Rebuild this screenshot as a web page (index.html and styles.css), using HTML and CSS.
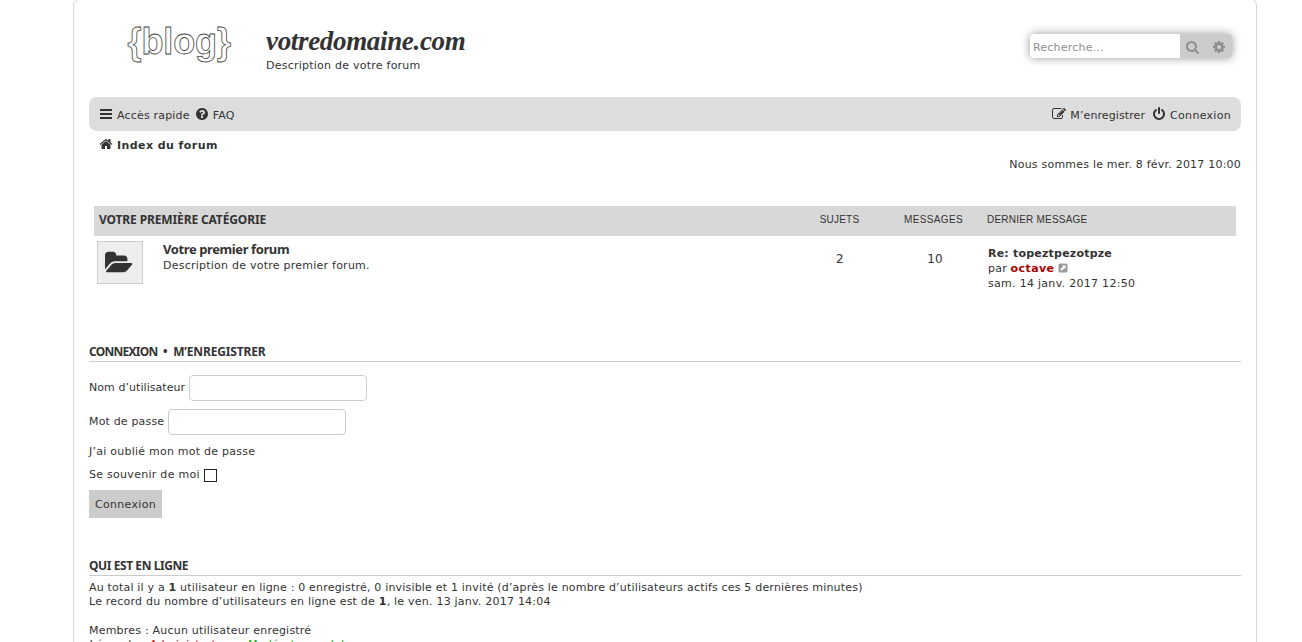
FILE: index.html
```html
<!DOCTYPE html>
<html lang="fr">
<head>
<meta charset="utf-8">
<title>votredomaine.com - Index du forum</title>
<link rel="stylesheet" href="styles.css">
</head>
<body>
<div class="wrap">
  <header class="header">
    <svg class="logo" width="112" height="46" viewBox="0 0 112 46"><text x="5.500" y="32" textLength="103.500" lengthAdjust="spacing">{blog}</text></svg>
    <div class="site">
      <h1 class="site-title">votredomaine.com</h1>
      <p class="site-desc">Description de votre forum</p>
    </div>
    <form class="search">
      <input class="search-input" type="text" placeholder="Recherche…">
      <span class="search-btn"><svg width="14" height="14" viewBox="0 0 1792 1792"><path d="M1152 832q0-185-131.500-316.500t-316.500-131.500-316.500 131.500-131.500 316.500 131.500 316.500 316.500 131.500 316.500-131.500 131.500-316.500zm512 832q0 52-38 90t-90 38q-54 0-90-38l-343-342q-179 124-399 124-143 0-273.500-55.500t-225-150-150-225-55.500-273.500 55.500-273.500 150-225 225-150 273.500-55.500 273.500 55.500 225 150 150 225 55.500 273.500q0 220-124 399l343 343q37 37 37 90z"/></svg></span>
      <span class="search-btn"><svg width="14" height="14" viewBox="0 0 1792 1792"><path d="M1152 896q0-106-75-181t-181-75-181 75-75 181 75 181 181 75 181-75 75-181zm512-109v222q0 12-8 23t-20 13l-185 28q-19 54-39 91 35 50 107 138 10 12 10 25t-9 23q-27 37-99 108t-94 71q-12 0-26-9l-138-108q-44 23-91 38-16 136-29 186-7 28-36 28h-222q-14 0-24.500-8.500t-11.500-21.500l-28-184q-49-16-90-37l-141 107q-10 9-25 9-14 0-25-11-126-114-165-168-7-10-7-23 0-12 8-23 15-21 51-66.500t54-70.500q-27-50-41-99l-183-27q-13-2-21-12.500t-8-23.500v-222q0-12 8-23t19-13l186-28q14-46 39-92-40-57-107-138-10-12-10-24 0-10 9-23 26-36 98.500-107.500t94.500-71.500q13 0 26 10l138 107q44-23 91-38 16-136 29-186 7-28 36-28h222q14 0 24.500 8.500t11.500 21.500l28 184q49 16 90 37l142-107q9-9 24-9 13 0 25 10 129 119 165 170 7 8 7 22 0 12-8 23-15 21-51 66.500t-54 70.500q26 50 41 98l183 28q13 2 21 12.500t8 23.500z"/></svg></span>
    </form>
  </header>

  <nav class="navbar">
    <a class="nav-link quick"><svg width="14" height="14" viewBox="0 0 14 14"><path d="M1 2h12v2H1zM1 6h12v2H1zM1 10h12v2H1z"/></svg><span>Accès rapide</span></a>
    <a class="nav-link faq"><svg width="14" height="14" viewBox="0 0 1792 1792"><path d="M1024 1376v-192q0-14-9-23t-23-9h-192q-14 0-23 9t-9 23v192q0 14 9 23t23 9h192q14 0 23-9t9-23zm256-672q0-88-55.500-163t-138.500-116-170-41q-243 0-371 213-15 24 8 42l132 100q7 6 19 6 16 0 25-12 53-68 86-92 34-24 86-24 48 0 85.500 26t37.500 59q0 38-20 61t-68 45q-63 28-115.500 86.500t-52.500 125.500v36q0 14 9 23t23 9h192q14 0 23-9t9-23q0-19 21.500-49.500t54.500-49.500q32-18 49-28.500t46-35 44.500-48 28-60.500 12.500-81zm384 192q0 209-103 385.500t-279.500 279.500-385.500 103-385.500-103-279.500-279.500-103-385.500 103-385.500 279.500-279.500 385.500-103 385.500 103 279.500 279.500 103 385.500z"/></svg><span>FAQ</span></a>
    <a class="nav-link register"><svg width="14" height="14" viewBox="0 0 1792 1792"><path d="M888 1184l116-116-152-152-116 116v56h96v96h56zm440-720q-16-16-33 1l-350 350q-17 17-1 33t33-1l350-350q17-17 1-33zm80 594v190q0 119-84.500 203.500t-203.500 84.500h-832q-119 0-203.500-84.500t-84.500-203.500v-832q0-119 84.500-203.500t203.500-84.500h832q63 0 117 25 15 7 18 23 3 17-9 29l-49 49q-14 14-32 8-23-6-45-6h-832q-66 0-113 47t-47 113v832q0 66 47 113t113 47h832q66 0 113-47t47-113v-126q0-13 9-22l64-64q15-15 35-7t20 29zm-96-738l288 288-672 672h-288v-288zm444 132l-92 92-288-288 92-92q28-28 68-28t68 28l152 152q28 28 28 68t-28 68z"/></svg><span>M’enregistrer</span></a>
    <a class="nav-link login-link"><svg width="14" height="14" viewBox="0 0 1792 1792"><path d="M1664 896q0 156-61 298t-164 245-245 164-298 61-298-61-245-164-164-245-61-298q0-182 80.500-343t226.500-270q43-32 95.500-25t83.500 50q32 42 24.500 94.500t-49.500 84.500q-98 74-151.500 181t-53.500 228q0 104 40.500 198.500t109.500 163.500 163.500 109.500 198.500 40.500 198.500-40.500 163.500-109.500 109.500-163.500 40.500-198.500q0-121-53.500-228t-151.500-181q-42-32-49.500-84.500t24.500-94.500q31-43 84-50t95 25q146 109 226.500 270t80.500 343zm-640-768v640q0 52-38 90t-90 38-90-38-38-90v-640q0-52 38-90t90-38 90 38 38 90z"/></svg><span>Connexion</span></a>
  </nav>
  <div class="crumbs"><svg width="14" height="14" viewBox="0 0 1792 1792"><path d="M1472 992v480q0 26-19 45t-45 19h-384v-384h-256v384h-384q-26 0-45-19t-19-45v-480q0-1 .5-3t.5-3l575-474 575 474q1 2 1 6zm223-69l-62 74q-8 9-21 11h-3q-13 0-21-7l-692-577-692 577q-12 8-24 7-13-2-21-11l-62-74q-8-10-7-23.500t11-21.500l719-599q32-26 76-26t76 26l244 204v-195q0-14 9-23t23-9h192q14 0 23 9t9 23v408l219 182q10 8 11 21.500t-7 23.500z"/></svg><b>Index du forum</b></div>
  <p class="time">Nous sommes le mer. 8 févr. 2017 10:00</p>

  <section class="forums">
    <div class="row head">
      <div class="cat">Votre première catégorie</div>
      <div class="num h-topics">Sujets</div>
      <div class="num h-posts">Messages</div>
      <div class="last">Dernier message</div>
    </div>
    <div class="row body">
      <div class="forum">
        <div class="forum-icon"><svg width="28" height="28" viewBox="0 0 1920 1792"><path d="M1879 952q0 31-31 66l-336 396q-43 51-120.500 86.500t-143.500 35.500h-1088q-34 0-60.500-13t-26.500-43q0-31 31-66l336-396q43-51 120.500-86.500t143.500-35.500h1088q34 0 60.500 13t26.500 43zm-343-344v160h-832q-94 0-197 47.500t-164 119.500l-337 396-5 6q0-4-.5-12.500t-.5-12.500v-960q0-92 66-158t158-66h320q92 0 158 66t66 158v32h544q92 0 158 66t66 158z"/></svg></div>
        <div class="forum-text">
          <h3 class="forum-title">Votre premier forum</h3>
          <p class="forum-desc">Description de votre premier forum.</p>
        </div>
      </div>
      <div class="num">2</div>
      <div class="num">10</div>
      <div class="last">
        <b class="re">Re: topeztpezotpze</b><br>
        <span>par</span> <b class="user">octave</b> <svg class="ext" width="10" height="10" viewBox="0 0 10 10"><rect x=".5" y=".5" width="9" height="9" rx="1.5"/><path d="M4 2.500h3.500V6L6.400 4.900 3.600 7.700 2.300 6.400 5.100 3.600z"/></svg><br>
        <span class="date">sam. 14 janv. 2017 12:50</span>
      </div>
    </div>
  </section>

  <h2 class="title login-title"><span class="t-login">Connexion</span><span class="dot">•</span><span class="t-register">M’enregistrer</span></h2>
  <form class="login">
    <label class="field"><span class="l-user">Nom d’utilisateur</span><input class="inputbox" type="text"></label>
    <label class="field"><span class="l-pass">Mot de passe</span><input class="inputbox" type="password"></label>
    <a class="forgot">J’ai oublié mon mot de passe</a>
    <label class="remember"><span>Se souvenir de moi</span><input class="check" type="checkbox"></label>
    <button class="button" type="button">Connexion</button>
  </form>

  <h2 class="title online-title">Qui est en ligne</h2>
  <div class="online">
    <p class="o1">Au total il y a <b>1</b> utilisateur en ligne : 0 enregistré, 0 invisible et 1 invité (d’après le nombre d’utilisateurs actifs ces 5 dernières minutes)</p>
    <p class="o2">Le record du nombre d’utilisateurs en ligne est de <b>1</b>, le ven. 13 janv. 2017 14:04</p>
    <p class="o3">Membres : Aucun utilisateur enregistré</p>
    <p class="o4"><i>Légende : <span class="admin">Administrateurs</span>, <span class="mod">Modérateurs globaux</span></i></p>
  </div>
</div>
</body>
</html>
```
FILE: styles.css
```css
* { box-sizing: border-box; }
html, body { margin: 0; height: 642px; overflow: hidden; }
body { background: #fff; color: #333; font-family: Verdana, "DejaVu Sans", sans-serif; font-size: 11px; line-height: 14px; letter-spacing: .21px; white-space: nowrap; }
h1, h2, h3, p { margin: 0; }
svg { display: block; fill: #333; flex: none; }

.wrap { width: 1184px; height: 644px; overflow: hidden; margin: -2px 0 0 73px; padding: 17px 15px 0; border: 1px solid #d8d8d8; border-bottom: 0; border-radius: 8px 8px 0 0; }
.header { display: flex; height: 81px; }
.logo { margin: 6px 0 0 33px; }
.logo text { font: bold 36px "Liberation Sans", Arial, sans-serif; letter-spacing: 0; fill: #fff; stroke: #444; stroke-width: .8px; }
.site { margin: 9px 0 0 32px; }
.site-title { font: italic bold 27px/32px "Liberation Serif", "Times New Roman", serif; letter-spacing: -.33px; }
.site-desc { margin-top: 2px; line-height: 14px; letter-spacing: .24px; }
.search { display: flex; width: 202px; height: 24px; margin: 18px 9px 0 auto; border-radius: 4px; box-shadow: 0 0 10px #999; background: #ccc; }
.search-input { width: 150px; height: 24px; margin: 0; padding: 2px 3px 0; border: 0; border-radius: 4px 0 0 4px; background: #fff; font: inherit; letter-spacing: .21px; }
.search-input::placeholder { color: #8f8f8f; opacity: 1; }
.search-btn { display: flex; align-items: center; justify-content: center; width: 26px; padding-top: 2px; }
.search-btn svg { fill: #8f8f8f; }

.navbar { display: flex; align-items: center; height: 34px; padding: 1px 10px 0; border-radius: 8px; background: #ddd; }
.nav-link { display: flex; align-items: center; gap: 4px; letter-spacing: .18px; }
.nav-link svg { margin-bottom: 2px; }
.nav-link span { padding-top: 2px; }
.faq { margin-left: 5px; }
.register { margin-left: auto; letter-spacing: .1px; }
.login-link { margin-left: 7px; letter-spacing: .3px; }
.crumbs { display: flex; align-items: center; gap: 4px; height: 28px; padding-left: 10px; letter-spacing: .43px; }
.crumbs svg { margin-bottom: 2px; }
.crumbs b { padding-top: 1px; }
.time { text-align: right; line-height: 12px; height: 47px; }

.forums { margin: 0 5px; }
.row { display: grid; grid-template-columns: 698px 95px 95px 1fr; }
.head { height: 30px; background: #d8d8d8; align-items: center; font: 10px/14px "Liberation Sans", Arial, sans-serif; text-transform: uppercase; padding-bottom: 3px; }
.cat { padding-left: 5px; font: bold 12px/14px "Noto Sans", sans-serif; letter-spacing: -.13px; }
.num { text-align: center; }
.h-posts { padding-right: 2px; letter-spacing: .35px; }
.head .last { padding-left: 5px; }
.body { height: 105px; }
.body .num { padding: 16px 0 0 1px; font-size: 12px; }
.body .last { padding: 10px 0 0 6px; line-height: 15px; }
.forum { display: flex; padding: 5px 0 0 3px; }
.forum-icon { display: grid; place-items: center; width: 46px; height: 43px; padding-right: 2px; border: 1px solid #ccc; background: #eee; }
.forum-text { margin-left: 20px; }
.forum-title { font: bold 13px/17px "Noto Sans", sans-serif; letter-spacing: -.4px; }
.forum-desc { padding-top: 1px; letter-spacing: .24px; }
.date { letter-spacing: .29px; }
.user { color: #a00; letter-spacing: .4px; }
.ext { display: inline-block; vertical-align: -1px; fill: #999; }
.ext path { fill: #fff; }

.title { border-bottom: 1px solid #ccc; font: bold 12px/16px "Noto Sans", sans-serif; text-transform: uppercase; height: 18px; }
.login-title { display: flex; gap: 5.5px; margin-top: 3px; }
.t-login { letter-spacing: -.75px; }
.t-register { letter-spacing: -.15px; }
.login { display: flex; flex-direction: column; align-items: flex-start; padding-top: 13px; }
.field { display: flex; gap: 4px; align-items: center; height: 26px; margin-bottom: 8px; }
.l-user { letter-spacing: .06px; }
.l-pass { letter-spacing: .17px; }
.inputbox { width: 178px; height: 26px; margin: 0; border: 1px solid #ccc; border-radius: 4px; background: #fff; }
.forgot { margin-top: 2px; line-height: 14px; letter-spacing: .24px; }
.remember { display: flex; gap: 4px; align-items: center; margin-top: 9px; height: 14px; letter-spacing: .28px; }
.check { appearance: none; width: 13px; height: 13px; margin: 1px 0 0; border: 1px solid #222; background: #fff; }
.button { height: 28px; width: 73px; margin-top: 8px; padding: 1px 0 0; border: 0; background: #ccc; color: #333; font: inherit; letter-spacing: .3px; }
.online-title { margin-top: 40px; letter-spacing: -.42px; }
.online { padding-top: 5px; }
.o1 { letter-spacing: .19px; }
.o2 { letter-spacing: .22px; }
.o3 { margin-top: 15px; }
.o4 { letter-spacing: .2px; }
.admin { color: #a00; }
.mod { color: #0a0; }
```
